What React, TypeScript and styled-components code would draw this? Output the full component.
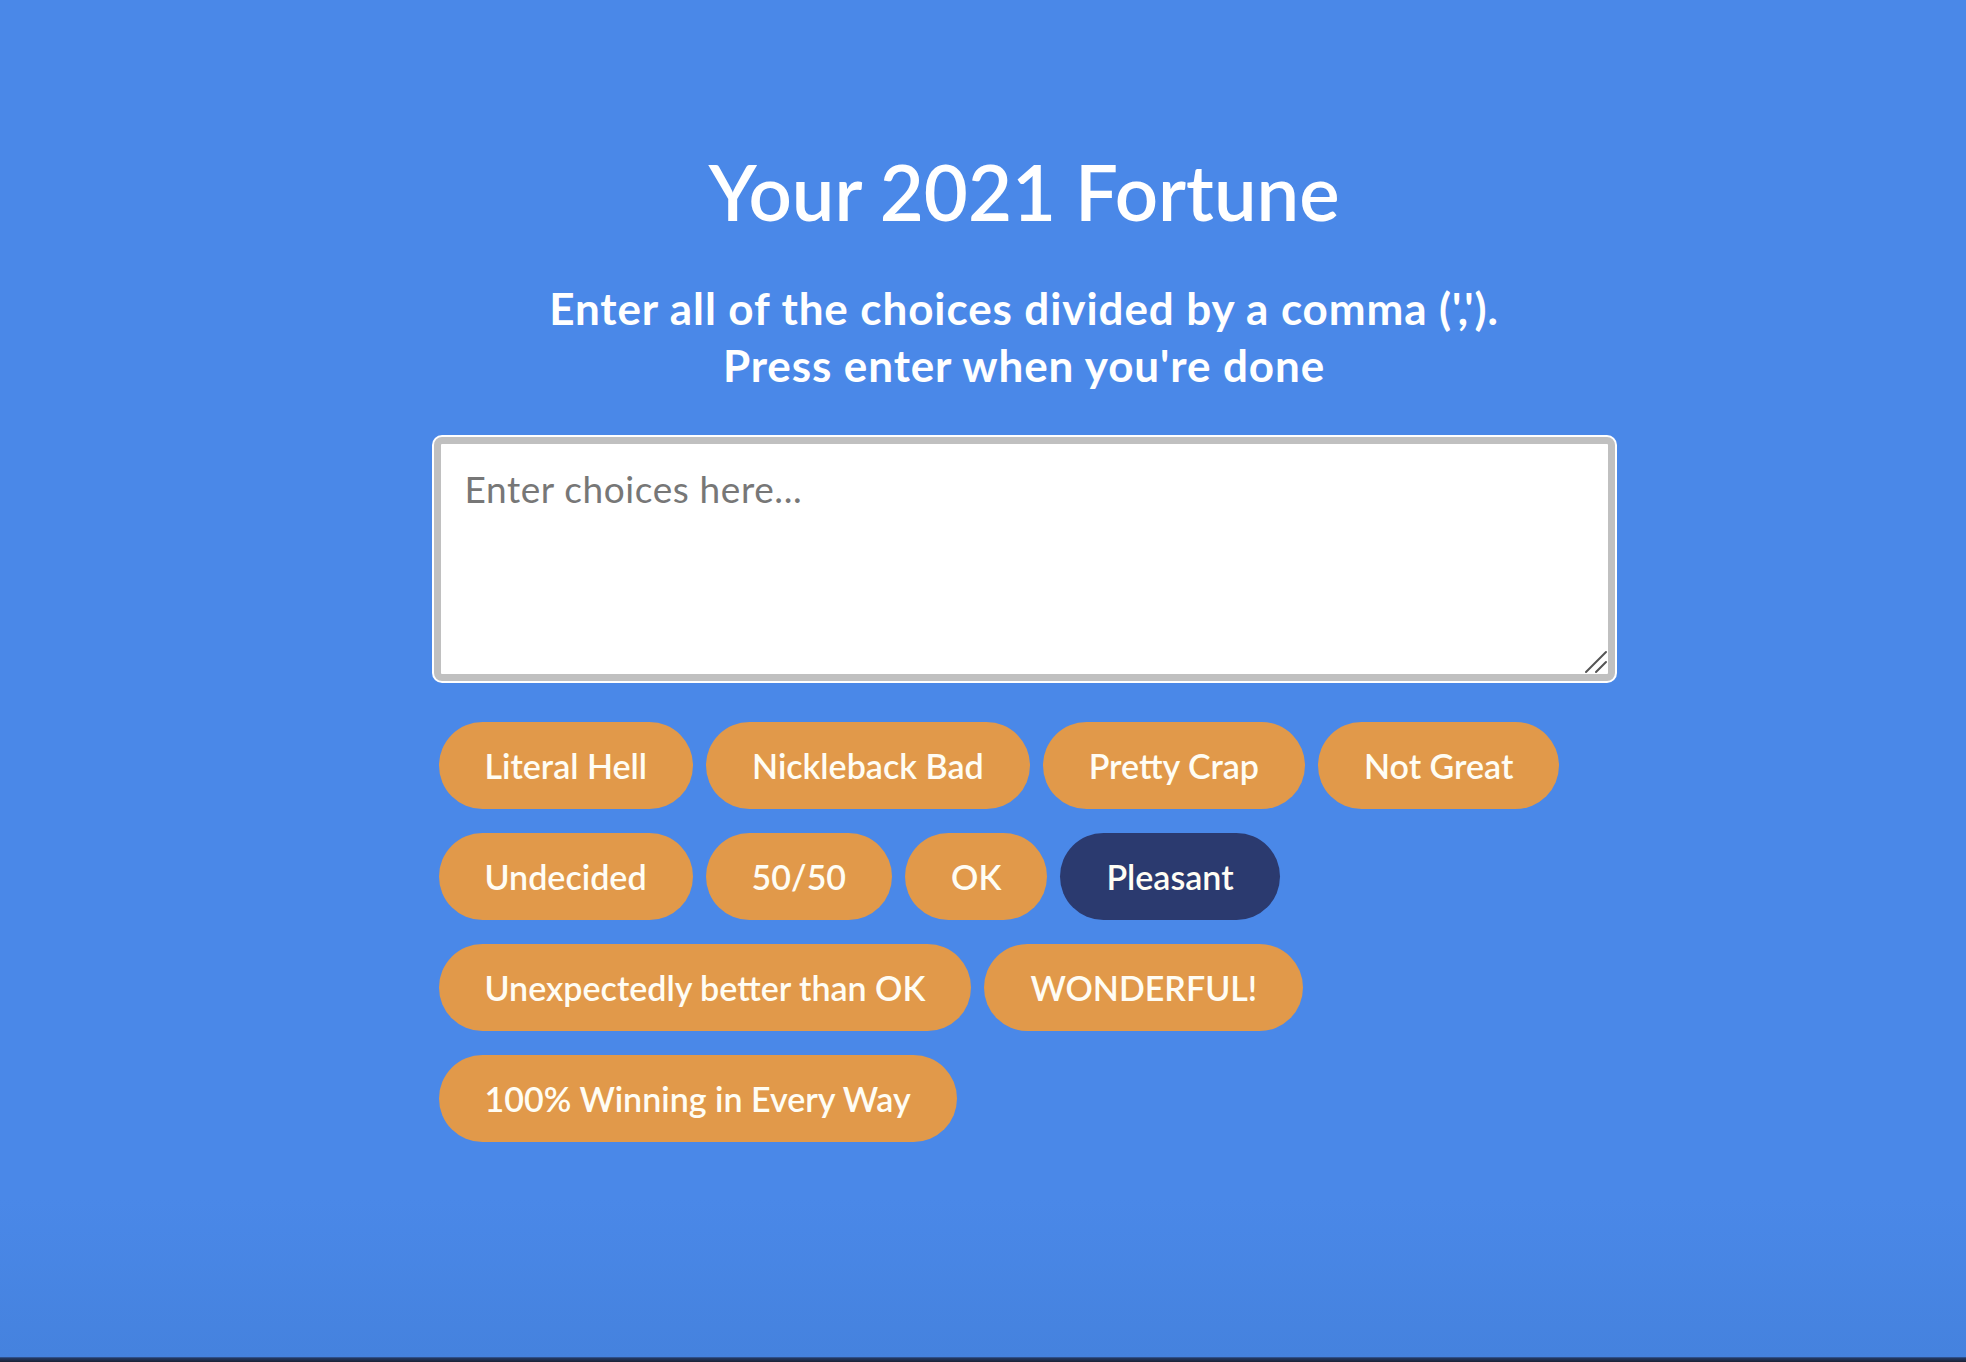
import React, { useState } from "react";
import styled, { createGlobalStyle } from "styled-components";

const Global = createGlobalStyle`
  html, body {
    margin: 0;
    padding: 0;
  }
  body {
    background: #4a88e8;
    font-family: Lato, "Open Sans", sans-serif;
    min-height: 1362px;
  }
`;

const Page = styled.main`
  box-sizing: border-box;
  min-height: 1362px;
  padding: 146px 0 0 82px;
  display: flex;
  flex-direction: column;
  align-items: center;
  background: linear-gradient(to bottom, #4a88e8 0%, #4a88e8 88%, #4582de 99.6%, #243a66 99.7%, #1b2235 100%);
`;

const Title = styled.h1`
  margin: 0;
  font-size: 76px;
  line-height: 91px;
  font-weight: 600;
  color: #ffffff;
`;

const Subtitle = styled.p`
  margin: 43px 0 0;
  font-size: 44px;
  line-height: 57px;
  letter-spacing: 0.9px;
  font-weight: 700;
  color: #ffffff;
  text-align: center;
`;

const Column = styled.div`
  width: 1181px;
  margin-top: 43px;
  display: flex;
  flex-direction: column;
  gap: 41px;
`;

const InputFrame = styled.div`
  position: relative;
  width: 1181px;
  height: 244px;
`;

const ChoicesInput = styled.textarea`
  box-sizing: border-box;
  display: block;
  width: 100%;
  height: 100%;
  padding: 22px 24px;
  border: 7px solid #c0c0c0;
  border-radius: 8px;
  box-shadow: 0 0 0 2px #ffffff;
  background: #ffffff;
  font-family: Lato, "Open Sans", sans-serif;
  font-size: 37px;
  letter-spacing: 0.6px;
  color: #333;
  caret-color: #000;
  outline: none;
  resize: none;
  &::placeholder {
    color: #777777;
  }
`;

const Grip = styled.svg`
  position: absolute;
  right: 7px;
  bottom: 7px;
  width: 24px;
  height: 24px;
  pointer-events: none;
`;

const Choices = styled.div`
  display: flex;
  flex-wrap: wrap;
  gap: 24px 13px;
  padding-left: 5px;
`;

const Choice = styled.button<{ $active?: boolean }>`
  height: 87px;
  padding: 0 46px;
  border: none;
  border-radius: 44px;
  background: ${(p) => (p.$active ? "#2b3a6f" : "#e1994a")};
  color: #fffdf4;
  font-family: Lato, "Open Sans", sans-serif;
  font-size: 34px;
  font-weight: 600;
  white-space: nowrap;
  cursor: pointer;
`;

const CHOICES = [
  "Literal Hell",
  "Nickleback Bad",
  "Pretty Crap",
  "Not Great",
  "Undecided",
  "50/50",
  "OK",
  "Pleasant",
  "Unexpectedly better than OK",
  "WONDERFUL!",
  "100% Winning in Every Way",
];

export default function App() {
  const [active, setActive] = useState("Pleasant");
  return (
    <>
      <Global />
      <Page>
        <Title>Your 2021 Fortune</Title>
        <Subtitle>
          Enter all of the choices divided by a comma (',').
          <br />
          Press enter when you're done
        </Subtitle>
        <Column>
          <InputFrame>
            <ChoicesInput placeholder="Enter choices here..." autoFocus />
            <Grip viewBox="0 0 24 24" aria-hidden="true">
              <path d="M2 22 L22 2 M12 22 L22 12" stroke="#555" strokeWidth="2" strokeLinecap="round" fill="none" />
            </Grip>
          </InputFrame>
          <Choices>
            {CHOICES.map((c) => (
              <Choice key={c} $active={c === active} onClick={() => setActive(c)}>
                {c}
              </Choice>
            ))}
          </Choices>
        </Column>
      </Page>
    </>
  );
}
